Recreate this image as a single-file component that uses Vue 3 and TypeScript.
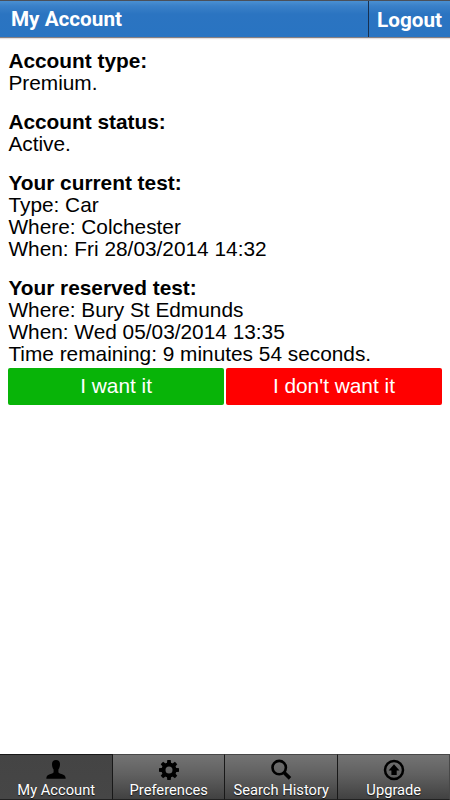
<script setup lang="ts">
interface Section {
  title: string
  lines: string[]
}

interface Tab {
  label: string
  icon: 'user' | 'gear' | 'search' | 'upgrade'
}

const sections: Section[] = [
  { title: 'Account type:', lines: ['Premium.'] },
  { title: 'Account status:', lines: ['Active.'] },
  { title: 'Your current test:', lines: ['Type: Car', 'Where: Colchester', 'When: Fri 28/03/2014 14:32'] },
  {
    title: 'Your reserved test:',
    lines: ['Where: Bury St Edmunds', 'When: Wed 05/03/2014 13:35', 'Time remaining: 9 minutes 54 seconds.'],
  },
]

const tabs: Tab[] = [
  { label: 'My Account', icon: 'user' },
  { label: 'Preferences', icon: 'gear' },
  { label: 'Search History', icon: 'search' },
  { label: 'Upgrade', icon: 'upgrade' },
]

const teeth = [0, 45, 90, 135, 180, 225, 270, 315]
</script>

<template>
  <div class="screen">
    <header class="bar">
      <h1 class="title">My Account</h1>
      <button class="logout">Logout</button>
    </header>

    <main class="content">
      <section v-for="s in sections" :key="s.title" class="section">
        <h2>{{ s.title }}</h2>
        <p v-for="line in s.lines" :key="line">{{ line }}</p>
      </section>
      <div class="actions">
        <button class="accept">I want it</button>
        <button class="decline">I don't want it</button>
      </div>
    </main>

    <nav class="tabs">
      <button v-for="(tab, i) in tabs" :key="tab.label" class="tab" :class="{ active: i === 0 }">
        <svg class="icon" width="22" height="22" viewBox="0 0 22 22">
          <path
            v-if="tab.icon === 'user'"
            d="M11 1C8.400 1 7 2.700 7 5.200C7 7.500 7.700 9.200 8.600 10.400V13C8.600 14.200 7.300 14.500 4.800 15.200C2.300 16 1.400 17.100 1.300 19.800H20.700C20.600 17.100 19.700 16 17.200 15.200C14.700 14.500 13.400 14.200 13.400 13V10.400C14.300 9.200 15 7.500 15 5.200C15 2.700 13.600 1 11 1Z"
          />
          <g v-else-if="tab.icon === 'gear'">
            <path v-for="a in teeth" :key="a" :transform="`rotate(${a} 11 11)`" d="M8.800 5L9.300 1H12.700L13.200 5Z" />
            <circle cx="11" cy="11" r="5.500" fill="none" stroke="#000" stroke-width="4" />
          </g>
          <g v-else-if="tab.icon === 'search'" fill="none" stroke="#000">
            <circle cx="9.200" cy="8.600" r="6.700" stroke-width="2.600" />
            <path d="M14 13.500L20 19.400" stroke-width="3.600" />
          </g>
          <g v-else>
            <circle cx="11" cy="11" r="9" fill="none" stroke="#000" stroke-width="2.500" />
            <path d="M11 5.300L16.500 11.400H13.700V15.900H8.400V11.400H5.600Z" />
          </g>
        </svg>
        <span class="label">{{ tab.label }}</span>
      </button>
    </nav>
  </div>
</template>

<style>
body {
  margin: 0;
  background: #fff;
}
</style>

<style scoped>
.screen {
  display: flex;
  flex-direction: column;
  width: 450px;
  height: 800px;
  overflow: hidden;
  background: #fff;
  color: #000;
  font-family: "Liberation Sans", Arial, sans-serif;
}

button {
  margin: 0;
  padding: 0;
  border: 0;
  font: inherit;
  color: #fff;
}

.bar {
  display: flex;
  justify-content: space-between;
  box-sizing: border-box;
  height: 38px;
  border-top: 1px solid #4b5059;
  border-bottom: 1px solid #857f82;
  background: linear-gradient(#4a90d2 0, #3a80c8 5px, #2b74c1 13px, #2974c2 100%);
  box-shadow: 0 1px 1px #e4e0e0;
  font-family: Roboto, sans-serif;
  font-weight: 700;
  color: #fff;
}

.title {
  margin: 0;
  padding-left: 11px;
  font-size: 20.700px;
  line-height: 37px;
}

.logout {
  box-sizing: border-box;
  width: 82px;
  padding-top: 2px;
  border-left: 1px solid #173050;
  background: transparent;
  font-size: 20.700px;
  line-height: 34px;
}

.content {
  flex: 1;
  padding: 12px 8.400px 0;
  font-size: 20.830px;
  line-height: 22px;
}

.section + .section {
  margin-top: 17px;
}

h2,
p {
  margin: 0;
  font-size: inherit;
  white-space: nowrap;
}

.actions {
  display: flex;
  gap: 2.400px;
  margin-top: 3px;
}

.actions button {
  flex: 1;
  height: 37px;
  padding-bottom: 2px;
  border-radius: 2px;
  line-height: 35px;
}

.actions .accept {
  background: #08b408;
}

.actions .decline {
  background: #f00;
}

.tabs {
  display: grid;
  grid-template-columns: repeat(4, 1fr);
  height: 46px;
}

.tab {
  display: flex;
  flex-direction: column;
  align-items: center;
  box-sizing: border-box;
  padding: 4px 0 0 1px;
  border-top: 1px solid #484848;
  border-right: 1px solid #181818;
  border-bottom: 1px solid #222;
  background: linear-gradient(#737373, #606060 45%, #414141);
  font-family: Roboto, sans-serif;
  font-size: 14.700px;
  line-height: 18px;
  text-shadow: 0 1px 1px #111;
}

.tab.active {
  border-top-color: #181818;
  background: linear-gradient(#444, #464646);
}

.tab:last-child {
  border-right-color: #484848;
}

.icon {
  flex: none;
}

.label {
  white-space: nowrap;
}
</style>
